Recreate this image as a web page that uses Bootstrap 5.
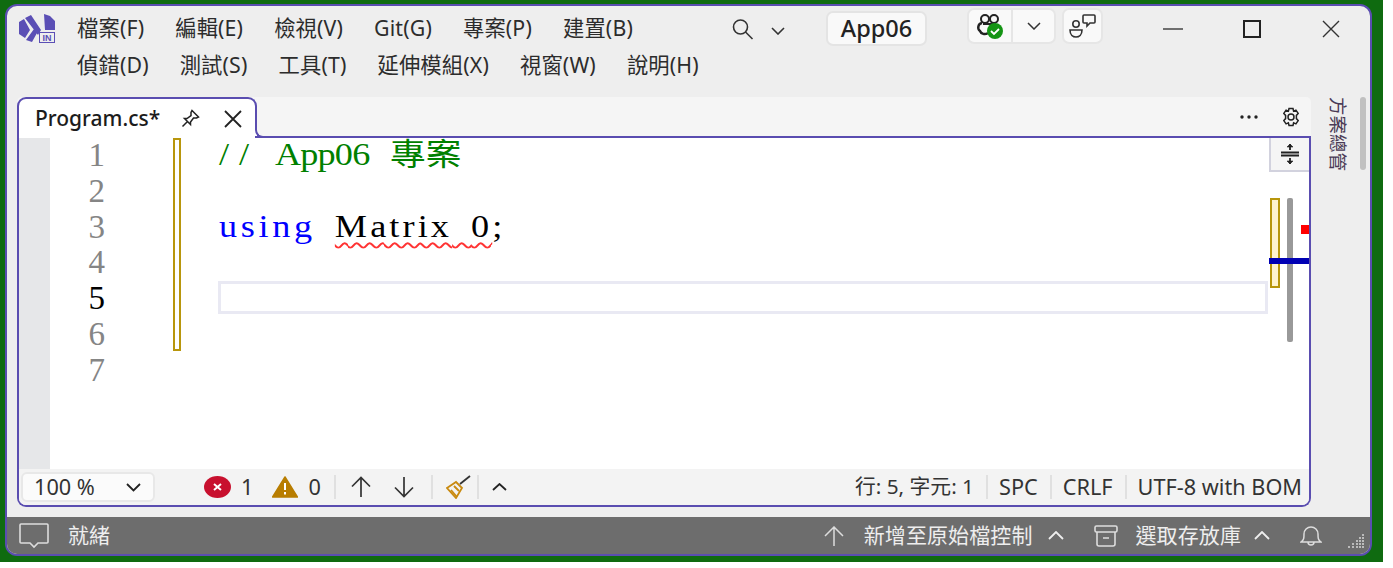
<!DOCTYPE html>
<html lang="zh-TW">
<head>
    <meta charset="UTF-8">
    <meta name="viewport" content="width=device-width, initial-scale=1.0">
    <title>Program.cs - App06</title>
    <link href="https://cdn.jsdelivr.net/npm/bootstrap@5.3.3/dist/css/bootstrap.min.css" rel="stylesheet">
    <style>
        html, body { background: #fff; overflow: hidden; }
        body { font-family: "Noto Sans", "Noto Sans CJK TC", sans-serif; color: #222; }
        svg { display: block; flex: none; }
        .desktop { width: 1383px; height: 562px; background: #0f6b10; padding: 4px 11px 6px 5px; }
        .vs-window { height: 552px; background: #eee; border: 2px solid #5a4db0; border-radius: 12px; overflow: hidden; }

        /* title bar */
        .title-row { height: 91px; padding: 3px 0 0 12px; }
        .logo { margin: 5px 22px 0 0; }
        .menu-col { width: 654px; }
        .menu-row { height: 37px; line-height: 37px; font-size: 21.3px; letter-spacing: .15px; gap: 31px; color: #2c2c2c; white-space: nowrap; }
        .project-box { width: 101px; height: 35px; margin: 2px 0 0 41px; background: #f9f9f9; border: 2px solid #e4e4e4; border-radius: 7px; font-size: 23.5px; font-weight: 500; }
        .tool-group { height: 36px; margin-top: -1px; background: #f9f9f9; border: 2px solid #e6e6e6; border-radius: 7px; }
        .copilot-group { width: 89px; margin-left: 40px; }
        .chat-group { width: 41px; margin-left: 6px; }
        .copilot-btn { width: 44px; border-right: 2px solid #e6e6e6; }

        /* document well */
        .doc-row { height: 410px; }
        .doc-well { width: 1294px; margin-left: 10px; }
        .tab-strip { height: 41px; background: #f5f5f5; border-radius: 5px 5px 0 0; }
        .doc-tab { width: 240px; background: #fff; border: 2px solid #5a4db0; border-bottom: 0; border-radius: 9px 9px 0 0; padding-left: 16px; font-size: 21px; font-weight: 500; color: #1c1c1c; position: relative; z-index: 1; }
        .doc-tab::after { content: ""; position: absolute; right: -2px; bottom: 0; width: 2px; height: 9px; background: #fff; }
        .tab-rest { margin-left: -2px; border-bottom: 2px solid #5a4db0; padding-right: 10px; position: relative; z-index: 2; }
        .tab-rest::before { content: ""; position: absolute; left: 0; bottom: -2px; width: 10px; height: 11px; border-left: 2px solid #5a4db0; border-bottom: 2px solid #5a4db0; border-bottom-left-radius: 8px; }
        .editor { height: 369px; border: 2px solid #5a4db0; border-top: 0; border-radius: 0 0 9px 9px; background: #fff; overflow: hidden; }
        .editor-body { height: 331px; position: relative; }
        .glyph-margin { width: 31px; background: #e6e7e9; }
        .line-nums { width: 55px; font-family: "Liberation Serif", serif; font-size: 33px; text-align: right; color: #858585; }
        .line-nums div, .code-line { height: 35.8px; line-height: 35.8px; }
        .line-nums .cur { color: #000; }
        .change-bar { width: 8px; height: 213px; margin-left: 68px; border: 2px solid #b8960c; }
        .code-col { width: 1049px; margin: -1px 0 0 37px; padding-left: 1px; font-family: "Liberation Serif", serif; font-size: 31.5px; color: #000; }
        .code-line { white-space: pre; }
        .code-text { display: inline-block; transform: scaleX(1.15); transform-origin: left center; }
        .code-col .cm { color: #008000; transform: scaleX(1.15) translateY(-3px); }
        .code-col .cm b { font-family: "Noto Sans CJK TC", sans-serif; font-weight: 400; font-size: 31px; }
        .code-col .kw { color: #00f; letter-spacing: 3.2px; }
        .code-col .sp { letter-spacing: 8.6px; }
        .code-col .sp-cm { letter-spacing: 6px; }
        .code-col .sp-cjk { letter-spacing: 10px; }
        .code-col .wd { letter-spacing: -.7px; }
        .code-col .err { letter-spacing: 2.7px; text-decoration: underline wavy #f33 1.5px; text-underline-offset: 5px; }
        .code-line.current { height: 33px; margin: 1px -1px 1.8px -1px; border: 3px solid #e9e9f3; }
        .split-btn { position: absolute; top: 0; right: 0; width: 40px; height: 34px; background: #f5f5f5; border-left: 2px solid #d2d2de; border-bottom: 2px solid #d2d2de; }
        .mark { position: absolute; }
        .mark-change { left: 1251px; top: 60px; width: 9px; height: 90px; border: 2px solid #b8960c; }
        .mark-thumb { left: 1268px; top: 60px; width: 4px; height: 144px; background: #999; border-radius: 2px; }
        .mark-err { left: 1282px; top: 87px; width: 9px; height: 9px; background: #f00; }
        .mark-caret { left: 1250px; top: 120px; width: 41px; height: 3px; background: #0000b4; }

        /* editor bottom bar */
        .editor-bar { height: 36px; background: #f3f3f3; font-size: 21.7px; color: #333; padding: 0 7px 0 2px; white-space: nowrap; }
        .zoom-box { width: 134px; height: 30px; background: #fbfbfb; border: 2px solid #e8e8e8; border-radius: 6px; padding: 0 12px 0 11px; margin-right: 49px; }
        .bar-sep { width: 2px; height: 24px; background: #e0e0e0; }
        .bar-sep.wide { margin: 0 11px 0 12px; }
        .caret-pos { font-size: 20.8px; }
        .side-panel { width: 59px; padding-left: 16px; gap: 11px; }
        .side-label { writing-mode: vertical-rl; text-orientation: sideways; font-size: 18.5px; line-height: 22px; color: #4a3a55; }
        .side-scroll { width: 6px; height: 73px; background: #c0c0c0; border-radius: 3px; }

        /* status bar */
        .status-bar { height: 37px; margin-top: 10px; background: #6d6d6d; color: #eee; font-size: 21px; padding: 0 5px 0 12px; white-space: nowrap; }
    </style>
</head>
<body>
<div class="desktop">
    <div class="vs-window d-flex flex-column">

        <div class="title-row d-flex align-items-start">
            <svg class="logo" width="36" height="29" viewBox="0 0 36 29">
                <path d="M0 8 5 5 11 16 6 24 0 20zM6 4 12 1 22 16 19 21zM7 26 15 15 18 19 13 28zM25 0 31 2 36 7V16H26z" fill="#5b4fb5"/>
                <rect x="20.500" y="18.500" width="15" height="10" fill="#eee" stroke="#5b4fb5"/>
                <text x="28" y="27" text-anchor="middle" font-family="Liberation Sans" font-weight="700" font-size="9" fill="#5b4fb5">IN</text>
            </svg>
            <div class="menu-col">
                <div class="menu-row d-flex">
                    <span>檔案(F)</span><span>編輯(E)</span><span>檢視(V)</span><span>Git(G)</span><span>專案(P)</span><span>建置(B)</span>
                </div>
                <div class="menu-row d-flex">
                    <span>偵錯(D)</span><span>測試(S)</span><span>工具(T)</span><span>延伸模組(X)</span><span>視窗(W)</span><span>說明(H)</span>
                </div>
            </div>
            <svg class="mt-2" width="24" height="24" viewBox="0 0 24 24" fill="none" stroke="#333" stroke-width="1.600"><circle cx="9.500" cy="10" r="7"/><path d="m14.500 15 7 7"/></svg>
            <svg class="ms-3" style="margin-top:18px" width="14" height="8" viewBox="0 0 14 8" fill="none" stroke="#333" stroke-width="1.600"><path d="m1 1 6 6 6-6"/></svg>
            <div class="project-box d-flex align-items-center justify-content-center">App06</div>
            <div class="tool-group copilot-group d-flex align-items-center">
                <div class="copilot-btn d-flex justify-content-center align-items-center h-100">
                    <svg width="30" height="28" viewBox="0 0 30 28">
                        <path d="M7 11a4.500 4.500 0 0 0-2 8c1 3 5 4 8 2" fill="none" stroke="#222" stroke-width="2.400"/>
                        <circle cx="10" cy="7" r="4" fill="none" stroke="#222" stroke-width="2"/>
                        <circle cx="19" cy="7" r="4" fill="none" stroke="#222" stroke-width="2"/>
                        <path d="M8 12h13" stroke="#222" stroke-width="2"/>
                        <circle cx="20" cy="19" r="8" fill="#149414"/>
                        <path d="m16 19 3 3 5-5" fill="none" stroke="#fff" stroke-width="1.800"/>
                    </svg>
                </div>
                <div class="d-flex flex-grow-1 justify-content-center">
                    <svg width="14" height="8" viewBox="0 0 14 8" fill="none" stroke="#333" stroke-width="1.500"><path d="m1 1 6 6 6-6"/></svg>
                </div>
            </div>
            <div class="tool-group chat-group d-flex align-items-center justify-content-center">
                <svg width="28" height="26" viewBox="0 0 28 26" fill="none" stroke="#333" stroke-width="1.600">
                    <circle cx="7" cy="11" r="3.200"/><path d="M1 17h12c0 5-3 7-6 7s-6-2-6-7z"/><path d="M15 2h10a1 1 0 0 1 1 1v6a1 1 0 0 1-1 1h-4l-3 3v-3h-3a1 1 0 0 1-1-1V3a1 1 0 0 1 1-1z"/>
                </svg>
            </div>
            <svg style="margin:19px 0 0 60px" width="20" height="2" viewBox="0 0 20 2"><path d="M0 1h20" stroke="#444" stroke-width="1.300"/></svg>
            <svg style="margin:11px 0 0 60px" width="18" height="18" viewBox="0 0 18 18" fill="none" stroke="#222" stroke-width="2"><rect x="1" y="1" width="16" height="16"/></svg>
            <svg style="margin:11px 0 0 61px" width="18" height="18" viewBox="0 0 18 18" fill="none" stroke="#333" stroke-width="1.400"><path d="m1 1 16 16M17 1 1 17"/></svg>
        </div>

        <div class="doc-row d-flex">
            <div class="doc-well">
                <div class="tab-strip d-flex">
                    <div class="doc-tab d-flex align-items-center">
                        <span>Program.cs*</span>
                        <svg class="ms-auto" style="margin-right:24px" width="19" height="19" viewBox="0 0 19 19" fill="none" stroke="#222" stroke-width="1.500"><path d="M11 1.500 17.500 8l-2 1-3 0-3 4 0 2.500L3.500 9.500 6 9.500l4-3 0-3zM6 13l-4.500 4.500"/></svg>
                        <svg style="margin-right:13px" width="18" height="18" viewBox="0 0 18 18" fill="none" stroke="#222" stroke-width="1.800"><path d="m1 1 16 16M17 1 1 17"/></svg>
                    </div>
                    <div class="tab-rest flex-grow-1 d-flex align-items-center justify-content-end">
                        <svg style="margin-right:23px" width="18" height="4" viewBox="0 0 18 4" fill="#222"><circle cx="2" cy="2" r="1.700"/><circle cx="9" cy="2" r="1.700"/><circle cx="16" cy="2" r="1.700"/></svg>
                        <svg width="20" height="20" viewBox="0 0 20 20" fill="none" stroke="#222" stroke-width="1.500"><circle cx="10" cy="10" r="3"/><path d="M8 1.500h4l.6 2.600 2.300-1 2.300 3.300-1.800 2 0 3.200 1.800 2-2.300 3.300-2.300-1-.6 2.600H8l-.6-2.600-2.300 1-2.300-3.300 1.800-2 0-3.200-1.800-2 2.300-3.300 2.300 1z"/></svg>
                    </div>
                </div>
                <div class="editor">
                    <div class="editor-body d-flex">
                        <div class="glyph-margin"></div>
                        <div class="line-nums">
                            <div>1</div><div>2</div><div>3</div><div>4</div><div class="cur">5</div><div>6</div><div>7</div>
                        </div>
                        <div class="change-bar"></div>
                        <div class="code-col">
                            <div class="code-line"><span class="code-text cm"><span class="sp">//</span><span class="sp-cm"> </span><span class="wd">App06</span><span class="sp-cjk"> </span><b>專案</b></span></div>
                            <div class="code-line"></div>
                            <div class="code-line"><span class="code-text"><span class="kw">using</span><span class="sp"> </span><span class="err">Matrix<span class="sp"> </span>0</span>;</span></div>
                            <div class="code-line"></div>
                            <div class="code-line current"></div>
                        </div>
                        <div class="split-btn d-flex align-items-center justify-content-center">
                            <svg width="20" height="22" viewBox="0 0 20 22" fill="#222" stroke="#222"><path d="M1 9.500h18M1 12.500h18" stroke-width="1.800"/><path d="M10 1v6M10 15v6" stroke-width="1.800"/><path d="m7 4 3-3 3 3zM7 18l3 3 3-3z" stroke-width=".6"/></svg>
                        </div>
                        <div class="mark mark-change"></div>
                        <div class="mark mark-thumb"></div>
                        <div class="mark mark-err"></div>
                        <div class="mark mark-caret"></div>
                    </div>
                    <div class="editor-bar d-flex align-items-center">
                        <div class="zoom-box d-flex align-items-center justify-content-between">
                            <span>100 %</span>
                            <svg width="15" height="9" viewBox="0 0 15 9" fill="none" stroke="#222" stroke-width="1.800"><path d="m1 1 6.500 6.500L14 1"/></svg>
                        </div>
                        <svg width="27" height="22" viewBox="0 0 27 22"><ellipse cx="13.500" cy="11" rx="13.500" ry="11" fill="#c8102e"/><path d="m10 8 7 6M17 8l-7 6" stroke="#fff" stroke-width="2"/></svg>
                        <span style="margin:0 19px 0 10px">1</span>
                        <svg width="26" height="22" viewBox="0 0 26 22"><path d="M13 1 25.500 21H.500z" fill="#b87d00" stroke="#b87d00" stroke-linejoin="round" stroke-width="1.500"/><path d="M13 7v7M13 16v2.500" stroke="#fff" stroke-width="2"/></svg>
                        <span style="margin:0 13px 0 10px">0</span>
                        <div class="bar-sep"></div>
                        <svg style="margin:0 23px 0 15px" width="20" height="22" viewBox="0 0 20 22" fill="none" stroke="#333" stroke-width="1.700"><path d="M10 21V2M1 10.500 10 1.500l9 9"/></svg>
                        <svg width="20" height="22" viewBox="0 0 20 22" fill="none" stroke="#333" stroke-width="1.700"><path d="M10 1v19M1 11.500l9 9 9-9"/></svg>
                        <div class="bar-sep" style="margin-left:17px"></div>
                        <svg style="margin:0 6px 0 13px" width="25" height="24" viewBox="0 0 25 24" fill="none" stroke="#c98a10" stroke-width="1.800"><path d="M1 13 10 7l6 6-6 10z"/><path d="m5 15 6 7M8 11l5 5"/><path d="m14 9 10-8" stroke="#333"/></svg>
                        <div class="bar-sep"></div>
                        <svg style="margin-left:13px" width="15" height="8" viewBox="0 0 15 8" fill="none" stroke="#222" stroke-width="1.800"><path d="m1 7 6.500-6L14 7"/></svg>
                        <div class="ms-auto d-flex align-items-center">
                            <span class="caret-pos">行: 5, 字元: 1</span>
                            <div class="bar-sep wide"></div>
                            <span>SPC</span>
                            <div class="bar-sep wide"></div>
                            <span>CRLF</span>
                            <div class="bar-sep wide"></div>
                            <span>UTF-8 with BOM</span>
                        </div>
                    </div>
                </div>
            </div>
            <div class="side-panel d-flex">
                <div class="side-label">方案總管</div>
                <div class="side-scroll"></div>
            </div>
        </div>

        <div class="status-bar d-flex align-items-center">
            <svg width="30" height="26" viewBox="0 0 30 26" fill="none" stroke="#ddd" stroke-width="1.600"><path d="M2 1h26a1 1 0 0 1 1 1v17a1 1 0 0 1-1 1H19l-4 4-4-4H2a1 1 0 0 1-1-1V2a1 1 0 0 1 1-1z"/></svg>
            <span style="margin-left:19px">就緒</span>
            <svg class="ms-auto" width="20" height="20" viewBox="0 0 20 20" fill="none" stroke="#ddd" stroke-width="1.500"><path d="M10 20V1M1 10l9-9 9 9"/></svg>
            <span style="margin-left:20px;letter-spacing:.1px">新增至原始檔控制</span>
            <svg style="margin-left:15px" width="16" height="9" viewBox="0 0 16 9" fill="none" stroke="#eee" stroke-width="1.800"><path d="m1 8 7-7 7 7"/></svg>
            <svg style="margin-left:30px" width="24" height="22" viewBox="0 0 24 22" fill="none" stroke="#ddd" stroke-width="1.600"><rect x="1" y="1" width="22" height="6" rx="1.500"/><path d="M3 7v12a2 2 0 0 0 2 2h14a2 2 0 0 0 2-2V7M9 13h6"/></svg>
            <span style="margin-left:18px;letter-spacing:.1px">選取存放庫</span>
            <svg style="margin-left:13px" width="16" height="9" viewBox="0 0 16 9" fill="none" stroke="#eee" stroke-width="1.800"><path d="m1 8 7-7 7 7"/></svg>
            <svg style="margin-left:30px" width="22" height="22" viewBox="0 0 22 22" fill="none" stroke="#ddd" stroke-width="1.500"><path d="M1 17c3-2 3-4 3-8a7 7 0 0 1 14 0c0 4 0 6 3 8zM8 17a3 3 0 0 0 6 0"/></svg>
            <svg style="margin:10px 0 0 25px" width="18" height="14" viewBox="0 0 18 14" fill="#bbb"><path d="M15 0h2v2h-2zM12 3h2v2h-2zM15 3h2v2h-2zM9 6h2v2H9zM12 6h2v2h-2zM15 6h2v2h-2zM5 9h2v2H5zM9 9h2v2H9zM12 9h2v2h-2zM15 9h2v2h-2zM1 12h2v2H1zM5 12h2v2H5zM9 12h2v2H9zM12 12h2v2h-2zM15 12h2v2h-2z"/></svg>
        </div>
    </div>
</div>
</body>
</html>
